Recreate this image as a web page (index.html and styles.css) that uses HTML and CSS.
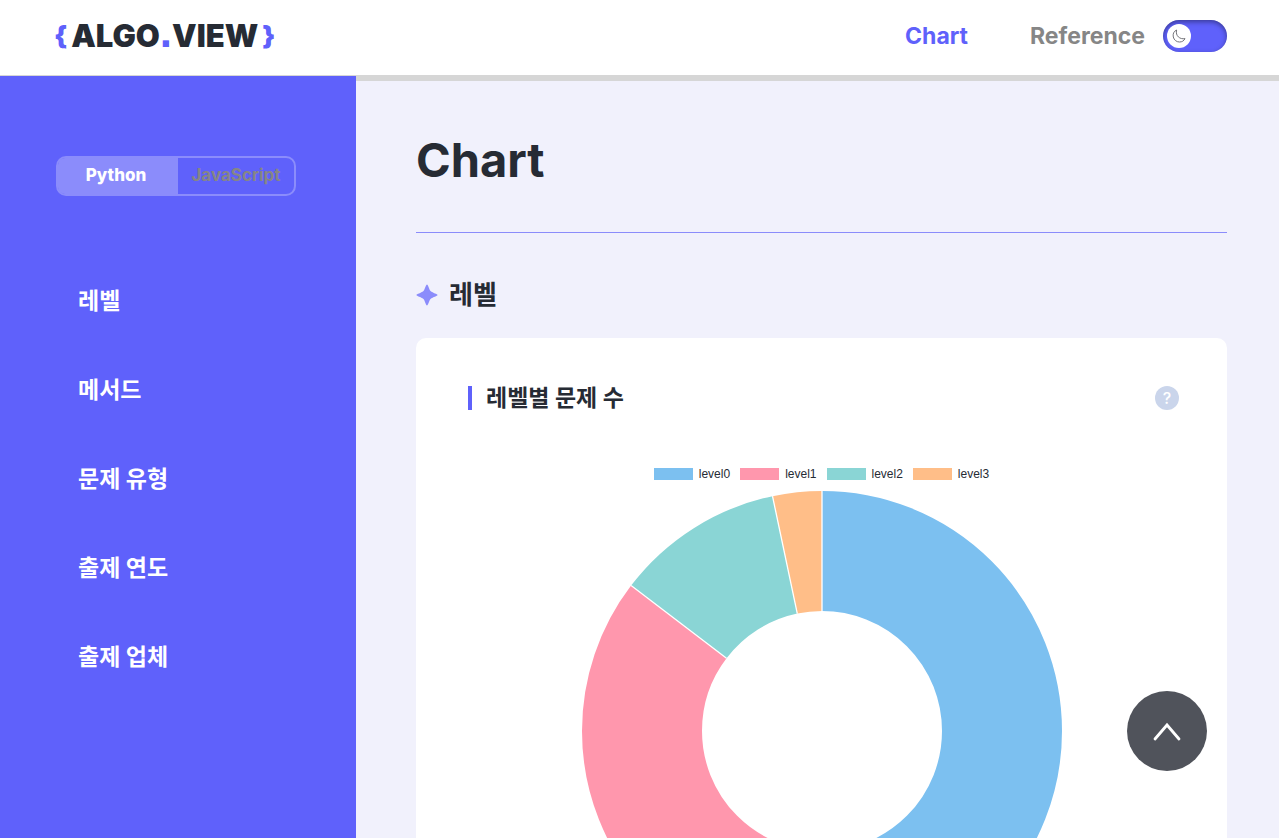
FILE: index.html
```html
<!DOCTYPE html>
<html lang="ko">
<head>
<meta charset="utf-8">
<meta name="viewport" content="width=device-width, initial-scale=1">
<title>ALGO.VIEW</title>
<link rel="stylesheet" href="styles.css">
</head>
<body>
<header class="header">
  <a class="logo" href="#"><span class="brace">{</span><span class="logo-name">ALGO<span class="dot">.</span>VIEW</span><span class="brace">}</span></a>
  <nav class="nav">
    <a class="nav-link active" href="#chart">Chart</a>
    <a class="nav-link" href="#reference">Reference</a>
    <button class="theme" type="button" aria-label="Dark mode">
      <span class="knob"><svg width="14" height="14" viewBox="0 0 14 14" fill="none" stroke="#74747a" stroke-linejoin="round"><path d="M4.600 1C1.800 2.200.6 5 1.300 8c.7 3 3.200 5 6.200 5 2.500 0 4.500-1.200 5.500-3.400C8 10.600 3.200 7 4.600 1z"/></svg></span>
    </button>
  </nav>
</header>
<div class="layout">
  <aside class="sidebar">
    <div class="languages">
      <button class="language selected" type="button">Python</button>
      <button class="language" type="button">JavaScript</button>
    </div>
    <nav class="menu">
      <a href="#level">레벨</a>
      <a href="#method">메서드</a>
      <a href="#type">문제 유형</a>
      <a href="#year">출제 연도</a>
      <a href="#company">출제 업체</a>
    </nav>
  </aside>
  <main class="content" id="chart">
    <h1 class="title">Chart</h1>
    <section id="level">
      <h2 class="section-title"><svg width="22" height="22" viewBox="0 0 22 22" fill="#8b8cfb"><path d="M11 .5C12 .5 13 5 14.500 7 17 9 21.500 10 21.500 11S17 13 14.500 15C13 17 12 21.500 11 21.500S9 17 7.500 15C5 13 .5 12 .5 11S5 9 7.500 7C9 5 10 .5 11 .5z"/></svg>레벨</h2>
      <div class="card">
        <div class="card-head">
          <h3 class="card-title">레벨별 문제 수</h3>
          <button class="help" type="button" aria-label="도움말">?</button>
        </div>
        <ul class="legend">
          <li><span class="swatch blue"></span>level0</li>
          <li><span class="swatch pink"></span>level1</li>
          <li><span class="swatch teal"></span>level2</li>
          <li><span class="swatch orange"></span>level3</li>
        </ul>
        <svg class="donut" viewBox="0 0 480 480" role="img" aria-label="레벨별 문제 수">
          <g fill="none" stroke-width="120" transform="rotate(-90 240 240)">
            <circle cx="240" cy="240" r="180" pathLength="360" stroke="#7cc0f0" stroke-dasharray="180 360"/>
            <circle cx="240" cy="240" r="180" pathLength="360" stroke="#ff97ad" stroke-dasharray="127.300 360" stroke-dashoffset="-180"/>
            <circle cx="240" cy="240" r="180" pathLength="360" stroke="#8ad5d5" stroke-dasharray="40.800 360" stroke-dashoffset="-307.300"/>
            <circle cx="240" cy="240" r="180" pathLength="360" stroke="#ffbe88" stroke-dasharray="11.900 360" stroke-dashoffset="-348.100"/>
          </g>
          <path d="M240 0v120M49.100 94.600l95.400 72.700M190.500 5.200l24.800 117.400M240 360v120" stroke="#fff" stroke-width="1.300"/>
        </svg>
      </div>
    </section>
  </main>
</div>
<button class="to-top" type="button" aria-label="맨 위로"><svg width="30" height="20" viewBox="0 0 30 20" fill="none" stroke="#fff" stroke-width="2.800" stroke-linecap="round"><path d="M3 18 15 4l12 14"/></svg></button>
</body>
</html>
```
FILE: styles.css
```css
* { box-sizing: border-box; }
body {
  margin: 0;
  height: 100vh;
  display: flex;
  flex-direction: column;
  overflow: hidden;
  color: #262b34;
  background: #f1f1fc;
  font-family: Inter, "Noto Sans CJK KR", sans-serif;
}
a { color: inherit; text-decoration: none; }
button { border: 0; padding: 0; font-family: inherit; cursor: pointer; }
h1, h2, h3, ul { margin: 0; padding: 0; }

.header {
  flex: none;
  display: flex;
  align-items: center;
  justify-content: space-between;
  padding: 20px 52px 23px 54px;
  background: #fff;
}
.logo { display: flex; align-items: center; gap: 4px; font-size: 31px; line-height: 32px; font-weight: 900; }
.brace { font-size: 26px; color: #5f61fb; }
.dot { color: #5f61fb; font-family: "Liberation Sans", sans-serif; font-size: 44px; line-height: 0; }
.nav { display: flex; align-items: center; }
.nav-link { margin-right: 62px; font-size: 23px; line-height: 32px; font-weight: 700; color: #868686; }
.nav-link + .nav-link { margin-right: 18px; }
.nav-link.active { color: #5f61fb; }
.theme {
  width: 64px;
  height: 32px;
  padding: 4px;
  border-radius: 16px;
  background: #5f61fb;
  box-shadow: inset 0 2px 5px rgba(0, 0, 0, .4);
}
.knob { display: grid; place-items: center; width: 24px; height: 24px; border-radius: 50%; background: #fff; }

.layout { flex: 1; min-height: 0; display: flex; }
.sidebar { flex: none; width: 356px; padding: 80px 60px 40px 56px; border-top: 1px solid #d6d6d6; background: #5f61fb; color: #fff; }
.languages { display: flex; height: 40px; border: 2px solid #8b8cfb; border-radius: 10px; }
.language { flex: 1; padding-bottom: 2px; background: transparent; color: #868686; font-size: 17px; font-weight: 700; }
.language.selected { flex: 0 0 120px; padding-right: 4px; background: #8b8cfb; color: #fff; border-radius: 7px 0 0 7px; font-weight: 800; }
.menu { display: flex; flex-direction: column; gap: 57px; padding: 89px 22px 0; font-size: 23px; line-height: 32px; font-weight: 700; }

.content {
  flex: 1;
  min-width: 0;
  padding: 47px 52px 60px 60px;
  border-top: 6px solid #d6d6d6;
  overflow-y: auto;
  scrollbar-width: none;
}
.title { padding-bottom: 40px; border-bottom: 1px solid #8b8cfb; font-size: 47px; line-height: 64px; font-weight: 700; }
.section-title { display: flex; align-items: center; gap: 11px; padding: 43px 0 25px; font-size: 26px; line-height: 37px; font-weight: 700; }
.card { padding: 44px 48px 60px; border-radius: 10px; background: #fff; }
.card-head { display: flex; align-items: center; justify-content: space-between; }
.card-title { display: flex; align-items: center; gap: 14px; padding-left: 4px; font-size: 23px; line-height: 32px; font-weight: 700; }
.card-title::before { content: ""; width: 4px; height: 24px; background: #5f61fb; }
.help { width: 24px; height: 24px; border-radius: 50%; background: #cad5eb; color: #fff; font-size: 16px; font-weight: 500; }
.legend {
  display: flex;
  justify-content: center;
  gap: 10px;
  padding: 53px 0 10px;
  list-style: none;
  font: 12px/14px "Liberation Sans", sans-serif;
}
.legend li { display: flex; align-items: center; gap: 6px; }
.swatch { width: 39px; height: 12px; }
.blue { background: #7cc0f0; }
.pink { background: #ff97ad; }
.teal { background: #8ad5d5; }
.orange { background: #ffbe88; }
.donut { display: block; width: 100%; max-width: 480px; margin: 0 auto; }

.to-top {
  position: fixed;
  right: 72px;
  bottom: 67px;
  display: grid;
  place-items: center;
  width: 80px;
  height: 80px;
  border-radius: 50%;
  background: #50535b;
}
```
